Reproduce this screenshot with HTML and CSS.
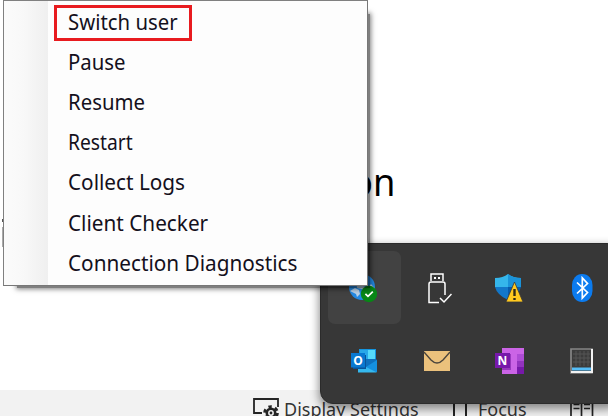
FILE: index.html
```html
<!DOCTYPE html>
<html lang="en">
<head>
<meta charset="utf-8">
<title>Client tray menu</title>
<link rel="stylesheet" href="styles.css">
</head>
<body>
<div class="desktop">
  <main class="page"><span class="heading">on</span><span class="edge"></span></main>
  <footer class="statusbar">
    <svg class="ic-display" width="27" height="22" viewBox="0 0 27 22" fill="none" stroke="#242424" stroke-width="1.8"><path d="M9 15H1V1h24v8"/><circle cx="18" cy="15" r="4.2" stroke-width="2.6"/><circle cx="18" cy="15" r="6.4" stroke-width="2.8" stroke-dasharray="3.35 3.35"/><circle cx="18" cy="15" r="1.4" fill="#222" stroke="none"/></svg>
    <span class="status display">Display Settings</span>
    <svg class="ic-focus" width="14" height="22" viewBox="0 0 14 22" fill="none" stroke="#242424" stroke-width="2"><path d="M1 1v20M8 1v4h5v16"/></svg>
    <span class="status focus">Focus</span>
    <svg class="ic-read" width="24" height="22" viewBox="0 0 24 22" fill="none" stroke="#242424" stroke-width="1.7"><path d="M1 0v22M11.5 0v22M22.5 0v22M3.5 2.5h6M3.5 6.5h6M3.5 10.5h6M14 2.5h6M14 6.5h6M14 10.5h6"/></svg>
  </footer>

  <section class="tray">
    <div class="cell active">
      <svg width="30" height="30" viewBox="0 0 30 30"><circle cx="13" cy="14" r="13" fill="#2389e3"/><path d="M1 18l5-3 4 2 1 4-3 3-1-3zM7 5l7-2 4 6-4 4 5 2 3-4 4 5-7 5-6-5-5-1z" fill="#b9d1e7"/><circle cx="20" cy="21" r="8.2" fill="#078716"/><path d="M16.4 20.8l2.6 2.6 4.8-4.8" fill="none" stroke="#fff" stroke-width="1.7"/></svg>
    </div>
    <div class="cell">
      <svg width="30" height="32" viewBox="0 0 30 32" fill="none" stroke="#fff" stroke-width="1.5"><path d="M9 9V2h12v7M17 30.5H7V12q0-2 2-2h12q2 0 2 2v11"/><path d="M12 6h2M16 6h2" stroke-width="2"/><path d="M18 26l4 4 7.5-8"/></svg>
    </div>
    <div class="cell">
      <svg width="30" height="30" viewBox="0 0 30 30"><path d="M14 1Q19 5 27 5v9H1V5q8 0 13-4z" fill="#35b6eb"/><path d="M14 1Q19 5 27 5v9H14z" fill="#1b93d9"/><path d="M1 14h13v13Q3 22 1 14z" fill="#1277c9"/><path d="M14 14h13q-2 9-13 13z" fill="#075bab"/><path d="M20.5 9L29 29H12z" fill="#ffc91f" stroke="#383838" stroke-width=".8"/><path d="M20.5 16v7M20.5 25v2" stroke="#332b15" stroke-width="2.4"/></svg>
    </div>
    <div class="cell">
      <svg width="22" height="30" viewBox="0 0 22 30"><rect x="1" y="1" width="20.5" height="28" rx="10" ry="11" fill="#0b7bef"/><path d="M6 9.5l10.5 10L11.3 25V5l5.2 5.5L6 20.5" fill="none" stroke="#fff" stroke-width="1.7"/></svg>
    </div>
    <div class="cell">
      <svg width="28" height="26" viewBox="0 0 28 26"><path d="M9 1h17v12H9z" fill="#1495df"/><path d="M18 2h7v9h-7z" fill="#55dafa"/><path d="M10 2h8v9h-8z" fill="#28a8e8"/><path d="M8 11h18l1 1v12H8z" fill="#0d70bd"/><path d="M27 12v12H8z" fill="#1490df"/><path d="M8 15l19 9.5H8z" fill="#35b8ee"/><path d="M3 7h13v14H3z" fill="#07549a"/><rect x="1" y="5" width="14" height="14.5" fill="#0878d0"/><text x="8" y="16.5" class="mark outlook">O</text></svg>
    </div>
    <div class="cell">
      <svg width="28" height="22" viewBox="0 0 28 22"><path d="M1 1h26v20H1z" fill="#ebc17c"/><path d="M1 2l7 8q6 6 12 0l7-8" fill="none" stroke="#4b453d" stroke-width="1.4"/></svg>
    </div>
    <div class="cell">
      <svg width="30" height="28" viewBox="0 0 30 28"><path d="M8 1h22v26H8z" fill="#cb64e6"/><path d="M23 7h7v7h-7z" fill="#ae4cd5"/><path d="M23 14h7v6h-7z" fill="#9333bf"/><path d="M23 20h7v7h-7z" fill="#7719aa"/><path d="M8 7h9v16H8z" fill="#9838bd"/><rect x="1" y="6" width="15" height="15" fill="#7719aa"/><text x="8.5" y="18" class="mark">N</text></svg>
    </div>
    <div class="cell">
      <svg width="24" height="26" viewBox="0 0 24 26"><path d="M1 1h21v24H1z" fill="#3c3c3c" stroke="#858585" stroke-width="1.7"/><path d="M6 3v15M10 3v15M14 3v15M18 3v15M3 6h17M3 10h17M3 14h17" stroke="#555" stroke-width="1"/><path d="M2 19.5h19v3H2z" fill="#55bdf7"/><path d="M1 24h21V1" fill="none" stroke="#f2f2f2" stroke-width="2"/></svg>
    </div>
  </section>

  <div class="menu-shadow"></div>
  <nav class="menu">
    <div class="item"><span class="label">Switch user</span></div>
    <div class="item"><span class="label">Pause</span></div>
    <div class="item"><span class="label">Resume</span></div>
    <div class="item"><span class="label narrow">Restart</span></div>
    <div class="item"><span class="label wide">Collect Logs</span></div>
    <div class="item"><span class="label wide">Client Checker</span></div>
    <div class="item"><span class="label wide">Connection Diagnostics</span></div>
  </nav>
</div>
</body>
</html>
```
FILE: styles.css
```css
*, *::before, *::after { box-sizing: border-box; }
body { margin: 0; overflow: hidden; font-family: "Noto Sans", "Open Sans", sans-serif; }
.desktop { position: relative; width: 608px; height: 416px; overflow: hidden; background: #fff; display: flex; flex-direction: column; }
.page { height: 390px; flex: none; padding: 153px 0 0 351px; }
.heading { display: block; font-size: 39px; line-height: 56px; color: #000; transform: scaleX(.93); transform-origin: 0 0; }
.edge { position: absolute; left: 2px; top: 227px; width: 1px; height: 20px; background: #aaa; }
.edge::before { content: ""; position: absolute; left: 0; top: -8px; width: 1px; height: 3px; background: #555; }
.statusbar { flex: none; height: 26px; background: #f2f2f2; display: flex; align-items: flex-start; padding: 8px 0 0 253px; overflow: hidden; color: #333; }
.statusbar svg { flex: none; }
.status { flex: none; font-size: 18px; line-height: 24px; white-space: nowrap; margin-top: -1px; transform-origin: 0 50%; }
.display { width: 135px; margin-left: 4px; }
.ic-focus { margin-left: 34px; }
.focus { width: 48px; margin-left: 11px; }
.ic-read { margin-left: 44px; }
.tray { position: absolute; left: 320px; top: 243px; width: 300px; height: 161px; padding: 7px 0 0 7px; background: #373737; border: 1px solid #2b2b2b; border-radius: 13px; box-shadow: 0 4px 10px 1px rgba(0,0,0,.45); display: grid; grid-template-columns: repeat(4, 72.5px); grid-template-rows: 73px 73px; }
.cell { display: flex; align-items: center; justify-content: center; }
.active { background: #424242; border-radius: 7px; }
.mark { font: bold 12px "Open Sans", sans-serif; fill: #fff; text-anchor: middle; }
.menu-shadow { position: absolute; left: 17px; top: 14px; width: 353px; height: 274px; background: rgba(0,0,0,.5); box-shadow: 0 0 5px 1px rgba(0,0,0,.5); }
.menu { position: absolute; left: 3px; top: 0; width: 365px; height: 286px; border: 1px solid #808080; border-right-color: #777; border-bottom-color: #777; padding: 0 0 0 64px; background: linear-gradient(90deg, #fbfbfb 0, #f8f8f8 20px, #efefef 44px, #fdfdfd 44px); }
.item { height: 40.1px; display: flex; align-items: center; position: relative; }
.label { font-size: 22px; line-height: 34px; white-space: nowrap; color: #14101c; transform: translateY(-.5px) scaleX(.925); transform-origin: 0 50%; }
.narrow { transform: translateY(-.5px) scaleX(.875); }
.wide { transform: translateY(-.5px) scaleX(.943); }
.item:first-child::before { content: ""; position: absolute; left: -14px; top: 4px; width: 138px; height: 36px; border: 3px solid #e81b1f; }
```
